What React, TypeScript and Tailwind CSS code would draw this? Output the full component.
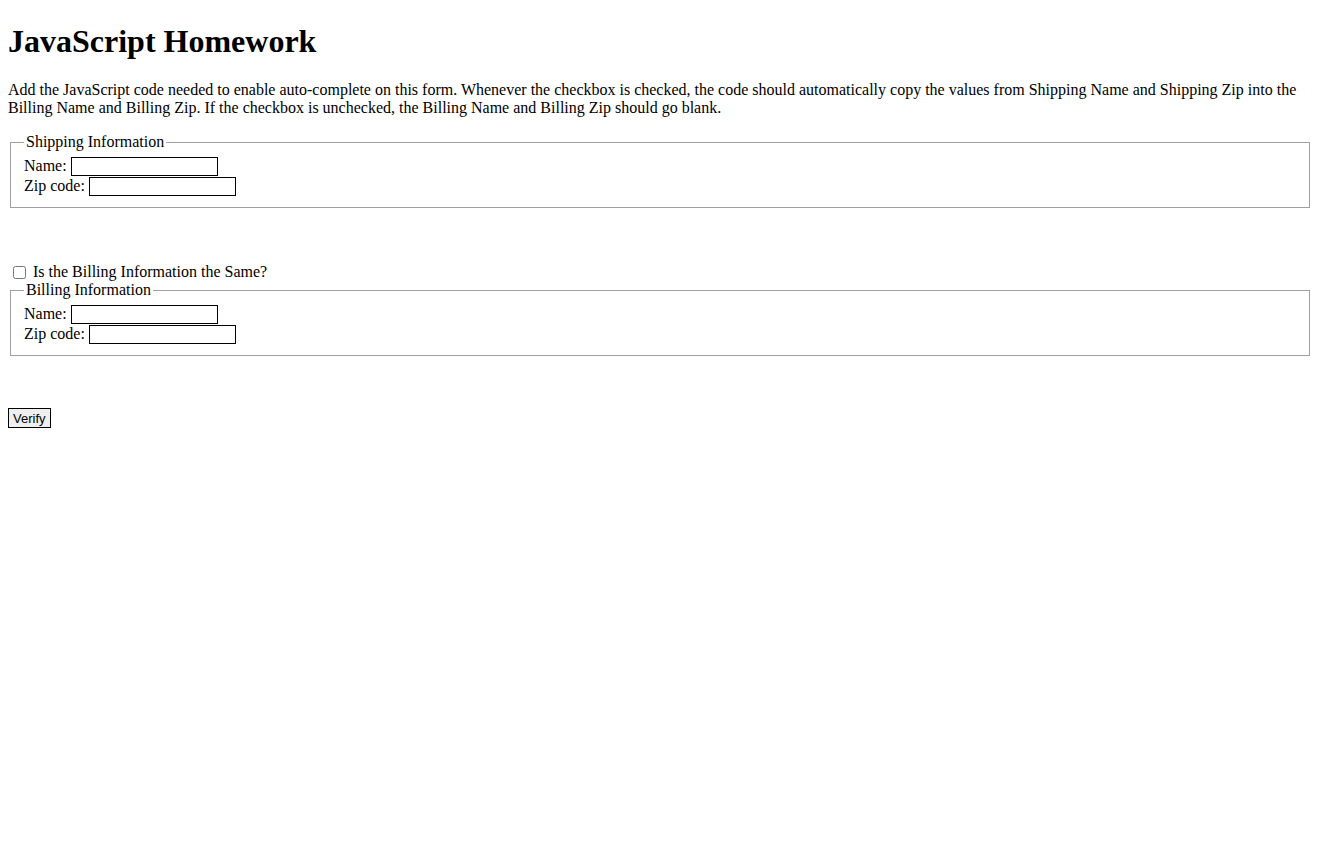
import { useState } from "react";

function Field({ label, value, onChange }: { label: string; value: string; onChange: (v: string) => void }) {
  return (
    <div className="flex h-5 items-center">
      <span>{label}</span>
      <input
        type="text"
        value={value}
        onChange={(e) => onChange(e.target.value)}
        className="ml-1 h-[19px] w-[147px] border border-black bg-white px-0.5 font-['Liberation_Sans',sans-serif] text-[13px] outline-none"
      />
    </div>
  );
}

export default function App() {
  const [shipName, setShipName] = useState("");
  const [shipZip, setShipZip] = useState("");
  const [billName, setBillName] = useState("");
  const [billZip, setBillZip] = useState("");
  const [same, setSame] = useState(false);

  function toggle(checked: boolean) {
    setSame(checked);
    setBillName(checked ? shipName : "");
    setBillZip(checked ? shipZip : "");
  }

  return (
    <div className="min-h-screen bg-white px-2 pt-px font-['Liberation_Serif',serif] text-base leading-[normal] text-black">
      <h1 className="mt-[22px] mb-[21px] text-[32px] font-bold">JavaScript Homework</h1>
      <p className="my-4">
        Add the JavaScript code needed to enable auto-complete on this form. Whenever the checkbox is checked, the
        code should automatically copy the values from Shipping Name and Shipping Zip into the Billing Name and Billing
        Zip. If the checkbox is unchecked, the Billing Name and Billing Zip should go blank.
      </p>

      <fieldset className="mx-0.5 border border-[#a0a0a0] px-[13px] pt-[5px] pb-[11px] shadow-[inset_1px_1px_0_#ffffff]">
        <legend className="px-0.5">Shipping Information</legend>
        <Field label="Name:" value={shipName} onChange={setShipName} />
        <Field label="Zip code:" value={shipZip} onChange={setShipZip} />
      </fieldset>

      <div className="mt-[55px] flex h-[18px] items-center">
        <input
          type="checkbox"
          checked={same}
          onChange={(e) => toggle(e.target.checked)}
          className="mt-[3px] mr-[7px] mb-[3px] ml-[5px] h-[13px] w-[13px]"
        />
        <span>Is the Billing Information the Same?</span>
      </div>

      <fieldset className="mx-0.5 border border-[#a0a0a0] px-[13px] pt-[5px] pb-[11px] shadow-[inset_1px_1px_0_#ffffff]">
        <legend className="px-0.5">Billing Information</legend>
        <Field label="Name:" value={billName} onChange={setBillName} />
        <Field label="Zip code:" value={billZip} onChange={setBillZip} />
      </fieldset>

      <button className="mt-[52px] h-5 border border-black bg-[#efefef] px-1 font-['Liberation_Sans',sans-serif] text-[13px] leading-none">
        Verify
      </button>
    </div>
  );
}
